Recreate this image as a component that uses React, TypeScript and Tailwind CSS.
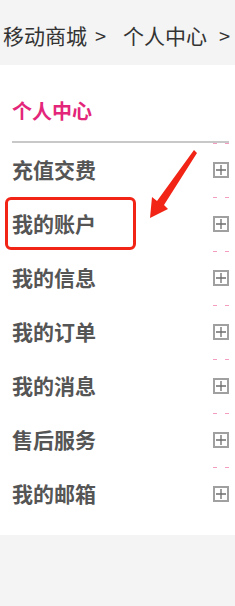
const items = ['充值交费', '我的账户', '我的信息', '我的订单', '我的消息', '售后服务', '我的邮箱']

function PlusBox() {
  return (
    <span className="flex h-[16px] w-[16px] items-center justify-center border-2 border-[#a0a0a0]">
      <svg width="10" height="10" viewBox="0 0 10 10">
        <path d="M5 0v10M0 5h10" stroke="#6e6e6e" strokeWidth="1.3" />
      </svg>
    </span>
  )
}

export default function App() {
  return (
    <div
      className="relative min-h-[606px] w-[235px] bg-[#f4f4f4] text-[#333]"
      style={{ fontFamily: '"Noto Sans CJK SC", "Microsoft YaHei", sans-serif' }}
    >
      <div className="flex h-[65px] items-center whitespace-nowrap pl-[3px] pt-[6px] text-[21px] leading-none text-[#333]">
        <span>移动商城</span>
        <span className="ml-[8px] text-[20px]">&gt;</span>
        <span className="ml-[17px]">个人中心</span>
        <span className="ml-[12px] text-[20px]">&gt;</span>
      </div>

      <div className="bg-white pb-[14px] pl-[12px] pr-[6px]">
        <div className="flex h-[76px] items-center pt-[16px] text-[20px] font-bold leading-none text-[#e4267a]">
          个人中心
        </div>
        <div className="h-[2px] bg-[#c8c8c8]" />
        {items.map((label) => (
          <div key={label} className="relative flex h-[54px] items-center justify-between">
            <span className="absolute right-0 top-0 flex w-[16px] justify-between">
              <span className="h-px w-[4px] bg-[#f59cc2]" />
              <span className="h-px w-[4px] bg-[#f59cc2]" />
            </span>
            <span className="pb-[2px] text-[21px] font-bold leading-none text-[#555]">{label}</span>
            <PlusBox />
          </div>
        ))}
      </div>

      <div className="pointer-events-none absolute left-[5px] top-[197px] h-[53px] w-[131px] rounded-[6px] border-[3px] border-[#f22416]" />

      <svg
        className="pointer-events-none absolute left-[140px] top-[145px]"
        width="62"
        height="80"
        viewBox="0 0 62 80"
      >
        <path d="M54 5 L57 8 L24 60 L28 64 L10 73 L12 52 L17 56 Z" fill="#f22416" />
      </svg>
    </div>
  )
}
